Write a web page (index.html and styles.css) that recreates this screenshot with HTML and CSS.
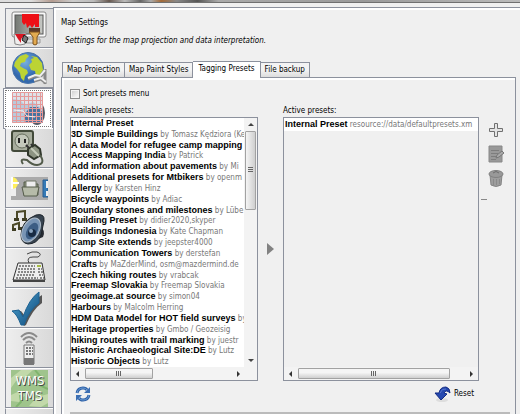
FILE: index.html
```html
<!DOCTYPE html>
<html lang="en">
<head>
<meta charset="utf-8">
<title>Map Settings</title>
<link rel="stylesheet" href="styles.css">
</head>
<body>
<div class="titlebar"></div>
<div class="window">
  <nav class="sidebar" aria-label="Preference categories">
    <button class="side" aria-label="Display">
      <svg viewBox="0 0 37 37"><defs><linearGradient id="scr" x2="1"><stop offset="0" stop-color="#747873"/><stop offset="1" stop-color="#c8cac6"/></linearGradient></defs><rect x="1" y="2" width="34" height="25" rx="2" fill="#f8f8f8" stroke="#888"/><rect x="4" y="5" width="28" height="19" fill="url(#scr)" stroke="#555"/><path d="M12 29h17v4H12z" fill="#ddd" stroke="#999"/><path d="M11 4h17v13h-4v-3l-3 4-2-3-3 3-1-5-2 2-2-3z" fill="#ed1016"/><path d="M18 18h11v4H18z" fill="#5c3929"/><path d="M18 22h11l-3 5v7q-2 2-4 0v-7z" fill="#e2aa50" stroke="#7e531f"/><path d="M3 24l12-1-1 11q-5 2-10 0z" fill="#eee" stroke="#888"/><path d="M4 24h11l-5 5v4l-3-4z" fill="#d91622"/><path d="M13 25l4 3-2 5-4-3z" fill="#777" stroke="#222"/></svg>
    </button>
    <button class="side" aria-label="Connection">
      <svg viewBox="0 0 37 37"><defs><radialGradient id="sea" cx=".4" cy=".3"><stop offset="0" stop-color="#78b1e1"/><stop offset="1" stop-color="#3268ad"/></radialGradient></defs><circle cx="17" cy="18" r="15.500" fill="url(#sea)" stroke="#4a74aa"/><path d="M4 12l5-6 6-2 3 2-3 3-1 3-4 1-1 3 3 2 4 2 1 3-3 3-1 5-3-3-1-5-3-4-3-3zM20 6l6 1 5 6 1 7-4 6-3 1-1-6-4-1-2-5 3-3-1-3 3-1z" fill="#bcd334"/><path d="M17 29l7-3 5 1 5-6M23 31l7-2 5 4M34 19v15" fill="none" stroke="#888" stroke-width="3"/><path d="M17 28l7-3 5 1 5-6M23 30l7-2 5 4" fill="none" stroke="#eee" stroke-width="2"/></svg>
    </button>
    <button class="side side-on" aria-label="Map settings" aria-current="page">
      <svg viewBox="0 0 37 37"><ellipse cx="27" cy="23" rx="8" ry="12" fill="#555b68"/><path d="M2 2h31v31H2z" fill="#dde2e9"/><path d="M2 9l8 1 5 5 8-3 10 7v14H2z" fill="#b9cadb"/><path d="M14 25l6-8h8l5 6v10H16z" fill="#46739f"/><path d="M2.500 2.500h30v30h-30zM6.500 2v31M10.500 2v31M14.500 2v31M18.500 2v31M22.500 2v31M26.500 2v31M30.500 2v31M2 6.500h31M2 10.500h31M2 14.500h31M2 18.500h31M2 22.500h31M2 26.500h31M2 30.500h31" fill="none" stroke="#e59a9a"/><path d="M4 20l9 1 4 5 8 1" fill="none" stroke="#f6eded"/></svg>
    </button>
    <button class="side" aria-label="Plugins">
      <svg viewBox="0 0 37 37"><rect x="1" y="1" width="21" height="20" rx="2" fill="#a7ad9d" stroke="#424a3a" stroke-width="2"/><circle cx="11" cy="11" r="7" fill="#c3c8bb" stroke="#656d5d"/><path d="M8 8v5M14 9v4" stroke="#222" stroke-width="2"/><path d="M15 15l5 5M20 14l3 4" stroke="#333" stroke-width="2"/><path d="M17 19l7-4 5 4 1 6-7 4-6-4z" fill="#8c9482" stroke="#30372b" stroke-width="2"/><path d="M20 18l8 8" stroke="#c4cbb9" stroke-width="2"/><path d="M29 25q6 9-3 10-5 0-10-5-8-2-4 4" fill="none" stroke="#525b4a" stroke-width="2"/></svg>
    </button>
    <button class="side" aria-label="Toolbar">
      <svg viewBox="0 0 37 37"><path d="M0 7h37v23H0z" fill="#aaa"/><path d="M0 12h5v14H0z" fill="#eee"/><circle cx="1" cy="13" r="6" fill="#fff05d"/><path d="M1 7v12M1 13h7" stroke="#fff" stroke-width="2"/><path d="M13 25V12h6l2 2h6v11z" fill="#89907b" stroke="#555c4b"/><path d="M15 11h10v8H15z" fill="#eee" stroke="#737969"/><path d="M11 17h17l-2 9H13z" fill="#b6bba9" stroke="#555c4b"/><path d="M32 10h5v17h-5z" fill="#367bb7" stroke="#275d91"/><path d="M35 11h2v7h-2zM35 21h2v5h-2z" fill="#eee"/></svg>
    </button>
    <button class="side" aria-label="Audio">
      <svg viewBox="0 0 37 37"><path d="M6 9V2l8-1v8M2 20v-5l6-2v5" fill="none" stroke="#4c4928" stroke-width="2"/><path d="M3 8h5v3H3zM11 8h5v3h-5zM1 18h4v3H1zM7 17h4v3H7z" fill="#403e24"/><path d="M29 17q6 3 3 10l-12 5z" fill="#272b32"/><path d="M25 5q9-2 8 6l-3 14q-4 9-13 9-7-1-7-9 0-14 15-20z" fill="#37434f" stroke="#1d242b"/><ellipse cx="20" cy="20" rx="8" ry="13" transform="rotate(30 20 20)" fill="#7894b4" stroke="#b0bdca"/><ellipse cx="21" cy="21" rx="5" ry="9" transform="rotate(30 21 21)" fill="#3c5d84"/><circle cx="21" cy="23" r="4" fill="#182b43"/><circle cx="20" cy="21" r="2" fill="#8ca6c1"/></svg>
    </button>
    <button class="side" aria-label="Shortcuts">
      <svg viewBox="0 0 37 37"><path d="M18 13q-3-6 4-6l5 0q5-3-1-5-5-1-10 2" fill="none" stroke="#444" stroke-width="1"/><path d="M7 13h24l3 17H2z" fill="#eee" stroke="#333"/><path d="M2 30h32v2H2z" fill="#444"/><path d="M8 16h16M7 19h17M7 22h17M6 25h18M5 28h22M27 19h4M27 22h5M28 25h4M29 28h4" stroke="#888" stroke-width="2" stroke-dasharray="2 1"/><path d="M26 15h4v2h-4z" fill="#a7bd45"/></svg>
    </button>
    <button class="side" aria-label="Validator">
      <svg viewBox="0 0 37 37"><defs><linearGradient id="tick" x2="1" y2="1"><stop offset="0" stop-color="#51a8d5"/><stop offset="1" stop-color="#0c4677"/></linearGradient></defs><path d="M5 21l8 15 2-1q7-16 16-22V5Q21 10 14 26l-4-5z" fill="#555"/><path d="M1 21l7-1 4 7Q18 9 28 2v11Q18 20 13 35h-3Q6 24 1 21z" fill="url(#tick)" stroke="#1d6293"/></svg>
    </button>
    <button class="side" aria-label="Remote control">
      <svg viewBox="0 0 37 37"><path d="M10 7q8-8 16 0M12 10q6-6 12 0M15 13q3-3 6 0" fill="none" stroke="#8a8a8a" stroke-width="2"/><path d="M13 15h10v19H13z" fill="#eee" stroke="#777"/><path d="M13 28h10v7H13z" fill="#777"/><path d="M15 18h7M15 21h7M15 24h7" stroke="#777" stroke-width="2" stroke-dasharray="2 1"/></svg>
    </button>
    <button class="side" aria-label="WMS TMS">
      <svg viewBox="0 0 37 37"><path d="M0 0h37v37H0z" fill="#9fc48c"/><path d="M0 8l10-8h12l-9 8-8 3-5 7zM18 36l8-9 11-3v9l-7 4zM0 25l9-4 5 4-6 7-8-1z" fill="#c2d9aa"/><path d="M24 0l6 7-4 7 11 5M5 37l5-5-1-7" fill="none" stroke="#80b56e" stroke-width="2"/><text class="map-shadow" x="20" y="16">WMS</text><text class="map-shadow" x="20" y="31">TMS</text><text class="map-text" x="19" y="15">WMS</text><text class="map-text" x="19" y="30">TMS</text></svg>
    </button>
    <div class="side"></div>
  </nav>

  <main class="settings">
    <h1>Map Settings</h1>
    <p class="intro">Settings for the map projection and data interpretation.</p>
    <div class="tabs" role="tablist">
      <button role="tab" class="tab">Map Projection</button>
      <button role="tab" class="tab">Map Paint Styles</button>
      <button role="tab" class="tab tab-on" aria-selected="true">Tagging Presets</button>
      <button role="tab" class="tab">File backup</button>
    </div>
    <section class="pane">
      <div class="sort"><input type="checkbox" id="sort"><label for="sort">Sort presets menu</label></div>
      <div class="columns">
        <h2>Available presets:</h2>
        <h2 class="active-title">Active presets:</h2>
        <div class="box available">
          <ul class="list">
            <li><b>Internal Preset</b></li>
            <li><b>3D Simple Buildings</b> by Tomasz Kędziora (Ke</li>
            <li><b>A data Model for refugee camp mapping</b></li>
            <li><b>Access Mapping India</b> by Patrick</li>
            <li><b>Add information about pavements</b> by Mi</li>
            <li><b>Additional presets for Mtbikers</b> by openm</li>
            <li><b>Allergy</b> by Karsten Hinz</li>
            <li><b>Bicycle waypoints</b> by Adiac</li>
            <li><b>Boundary stones and milestones</b> by Lübe</li>
            <li><b>Building Preset</b> by didier2020,skyper</li>
            <li><b>Buildings Indonesia</b> by Kate Chapman</li>
            <li><b>Camp Site extends</b> by jeepster4000</li>
            <li><b>Communication Towers</b> by derstefan</li>
            <li><b>Crafts</b> by MaZderMind, osm@mazdermind.de</li>
            <li><b>Czech hiking routes</b> by vrabcak</li>
            <li><b>Freemap Slovakia</b> by Freemap Slovakia</li>
            <li><b>geoimage.at source</b> by simon04</li>
            <li><b>Harbours</b> by Malcolm Herring</li>
            <li><b>HDM Data Model for HOT field surveys</b> by</li>
            <li><b>Heritage properties</b> by Gmbo / Geozeisig</li>
            <li><b>hiking routes with trail marking</b> by juestr</li>
            <li><b>Historic Archaeological Site:DE</b> by Lutz</li>
            <li><b>Historic Objects</b> by Lutz</li>
          </ul>
          <div class="vbar"><i class="arrow up"></i><div class="vthumb"><i class="grip"></i></div><i class="arrow down"></i></div>
          <div class="hbar"><i class="arrow left"></i><div class="track"><div class="hthumb"><i class="grip"></i></div></div><i class="arrow right"></i></div>
        </div>
        <button class="move" aria-label="Activate preset"><svg viewBox="0 0 7 12"><path d="M0 0l7 6-7 6z" fill="#828282"/></svg></button>
        <div class="box active">
          <ul class="chosen"><li><b>Internal Preset</b> resource://data/defaultpresets.xm</li></ul>
          <div class="hbar"><i class="arrow left"></i><div class="track wide"><div class="hthumb"><i class="grip"></i></div></div><i class="arrow right"></i></div>
        </div>
        <div class="tools">
          <button aria-label="Add"><svg viewBox="0 0 16 18"><path d="M6.500 2.500h3v5h5v3h-5v5h-3v-5h-5v-3h5z" fill="#e4e4e4" stroke="#707070"/></svg></button>
          <button aria-label="Edit"><svg viewBox="0 0 16 18"><path d="M1 1h13v16H1z" fill="#999" stroke="#888"/><path d="M3 5.500h8M3 8.500h7M3 11.500h5M3 14.500h5" stroke="#7d7d7d"/><path d="M8 13l1-3 5-4 2 2-5 4z" fill="#aaa" stroke="#777"/></svg></button>
          <button aria-label="Delete"><svg viewBox="0 0 16 18"><path d="M2 6h12l-1 10q-5 3-10 0z" fill="#9d9d9d" stroke="#858585"/><ellipse cx="8" cy="5" rx="7" ry="3.500" fill="#999" stroke="#808080"/><path d="M5 4q3-3 6 0" fill="none" stroke="#6c6c6c"/><path d="M5.500 10v6M8.500 10v6M11.500 10v5" stroke="#8a8a8a"/></svg></button>
          <hr>
        </div>
      </div>
      <div class="actions">
        <button class="refresh" aria-label="Reload"><svg viewBox="0 0 16 16"><path d="M2 7Q3 2 8 2q3 0 4 2M14 9q-1 5-6 5-3 0-4-2" fill="none" stroke="#2f62a8" stroke-width="3"/><path d="M2 7Q3 2 8 2q3 0 4 2M14 9q-1 5-6 5-3 0-4-2" fill="none" stroke="#6a9ad2"/><path d="M15 1v6H9zM1 15V9h6z" fill="#3c6fb3"/></svg></button>
        <button class="reset"><svg viewBox="0 0 17 16"><ellipse cx="8" cy="14" rx="6" ry="2" fill="#ddd"/><path d="M1 7h4q1-6 7-6 4 1 4 6-4-4-6 0l3 1-6 6z" fill="#2649b0" stroke="#132b83"/><path d="M6 7q2-5 6-4" fill="none" stroke="#5977cf"/></svg>Reset</button>
      </div>
    </section>
  </main>
</div>
</body>
</html>
```
FILE: styles.css
```css
* { box-sizing: border-box; }
html, body { height: 100%; }
body {
  margin: 0;
  display: flex;
  flex-direction: column;
  overflow: hidden;
  background: #f0f0f0;
  color: #000;
  font: 8px/12px "DejaVu Sans Condensed", "DejaVu Sans", sans-serif;
}
button {
  margin: 0;
  padding: 0;
  border: 0;
  background: none;
  color: inherit;
  font: inherit;
}
svg { display: block; }
h1, h2, p, ul { margin: 0; padding: 0; font-weight: normal; font-size: 8px; }
ul { list-style: none; }

.titlebar {
  flex: none;
  height: 3px;
  border-bottom: 1px solid #707070;
  background: linear-gradient(90deg, #ddd 0 6%, #b39b90 10%, #ccc 14%, #bbb 18%, #665850 21%, #bbb 24%, #666 27%, #aaa 29%, #a36a38 31%, #888 34%, #555 38%, #aaa 42%, #999 70%, #bbb);
}
.window { flex: 1; display: flex; min-height: 0; }

.sidebar {
  flex: none;
  width: 53px;
  padding: 5px 0 0 5px;
  overflow: hidden;
}
.side {
  display: flex;
  justify-content: center;
  width: 100%;
  height: 40px;
  padding-top: 1px;
  border: solid #8c919d;
  border-width: 1px 0 1px 1px;
  border-top-color: #fff;
  background: linear-gradient(90deg, #eee, #d9d9d9);
}
.side:first-child { border-top-color: #8c919d; }
.side svg { width: 37px; height: 37px; }
.side-on {
  width: calc(100% + 2px);
  height: 41px;
  margin: 0 0 -1px -2px;
  border: 1px solid #8c919d;
  outline: 1px dotted #777;
  outline-offset: -3px;
  background: #fff;
}
.map-text, .map-shadow { font: 13px "DejaVu Sans Condensed", sans-serif; text-anchor: middle; fill: #fff; }
.map-shadow { fill: #444; }

.settings {
  flex: 1;
  display: flex;
  flex-direction: column;
  min-width: 0;
  margin-top: 4px;
  padding: 9px 4px 0 7px;
  border: solid #8c919d;
  border-width: 1px 0 0 1px;
  box-shadow: inset 2px 2px #fff;
}
.intro { margin: 6px 0 0 4px; font-style: italic; }
.tabs { display: flex; align-items: flex-end; height: 30px; padding-left: 1px; }
.tab {
  height: 15px;
  padding: 0 4px;
  border: 1px solid #8c919d;
  border-width: 1px 1px 0 0;
  background: linear-gradient(#f3f3f3 50%, #dcdcdc);
  white-space: nowrap;
}
.tab:first-child { border-left-width: 1px; }
.tab-on { position: relative; height: 17px; margin-bottom: -1px; padding: 0 5px 2px; background: #fff; }
.pane {
  flex: 1;
  display: flex;
  flex-direction: column;
  min-height: 0;
  padding: 9px 5px 0 8px;
  border: solid #8c919d;
  border-width: 1px 1px 0;
  box-shadow: inset 2px 2px #fff;
}
.sort { display: flex; align-items: center; gap: 3px; height: 13px; }
.sort input {
  appearance: none;
  width: 10px;
  height: 10px;
  margin: 0;
  border: 1px solid #8e8f8f;
  background: linear-gradient(135deg, #ccc, #fff);
  box-shadow: inset 0 0 0 1px #f4f4f4;
}
.columns {
  flex: 1;
  display: grid;
  grid-template: 12px minmax(0, 1fr) / minmax(0, 188fr) 25px minmax(0, 196fr) 31px;
  min-height: 0;
  margin-top: 5px;
}
.active-title { grid-column: 3; }
.box { border: 1px solid #8c919d; min-height: 0; }
.available {
  grid-column: 1;
  display: grid;
  grid-template: minmax(0, 1fr) 13px / minmax(0, 1fr) 13px;
}
.list {
  display: flex;
  flex-direction: column;
  min-height: 0;
  overflow: hidden;
  background: #fff;
}
li { overflow: hidden; color: #777; white-space: nowrap; }
li b { color: #000; font: bold 9px/11px "Liberation Sans", Arial, sans-serif; }
.list li { flex: 1; min-height: 0; overflow: visible; line-height: 11px; }
.active { display: flex; flex-direction: column; justify-content: space-between; }
.chosen { padding: 0 1px; background: #fff; line-height: 13px; }

.vbar, .hbar { display: flex; align-items: center; }
.vbar { flex-direction: column; background: #f3f3f3; padding: 5px 0; }
.hbar { height: 13px; padding: 0 5px; background: #f3f3f3; }
.vthumb, .hthumb { display: flex; align-items: center; justify-content: center; border: 1px solid #a2a2a2; border-radius: 1px; }
.vthumb { width: 11px; height: 33%; margin: 5px 0 auto; background: linear-gradient(90deg, #f5f5f5, #cfcfcf); }
.hthumb { width: 49%; height: 11px; background: linear-gradient(#f5f5f5 40%, #cfcfcf); }
.track { flex: 1; padding: 0 20px 0 6px; }
.wide .hthumb { width: 100%; }
.available .track { margin-right: 13px; padding-right: 0; }
.available .hbar { grid-column: 1 / 3; }
.available .hbar .right { margin-right: 12px; }
.grip { width: 6px; height: 5px; background: repeating-linear-gradient(90deg, #666 0 1px, transparent 1px 2px); }
.vthumb .grip { width: 5px; height: 6px; background: repeating-linear-gradient(#666 0 1px, transparent 1px 2px); }
.arrow { flex: none; width: 0; height: 0; border: 3px solid transparent; }
.up { border-width: 0 3px 3px; border-bottom-color: #444; }
.down { border-width: 3px 3px 0; border-top-color: #444; }
.left { border-width: 3px 3px 3px 0; border-right-color: #333; }
.right { border-width: 3px 0 3px 3px; border-left-color: #333; }

.move { display: flex; align-items: center; justify-content: center; }
.move svg { width: 7px; height: 12px; }
.tools { display: flex; flex-direction: column; align-items: center; gap: 6px; padding: 4px 0 0 2px; }
.tools svg { width: 16px; height: 18px; }
.tools hr { align-self: flex-start; width: 6px; margin: 6px 0 0; border: 0; border-top: 1px solid #888; }

.actions {
  display: flex;
  align-items: center;
  justify-content: space-between;
  height: 33px;
  padding: 0 36px 6px 5px;
  border-bottom: 2px solid #bbb;
}
.refresh svg { width: 16px; height: 16px; }
.reset { display: flex; align-items: center; gap: 3px; }
.reset svg { width: 17px; height: 16px; }
```
